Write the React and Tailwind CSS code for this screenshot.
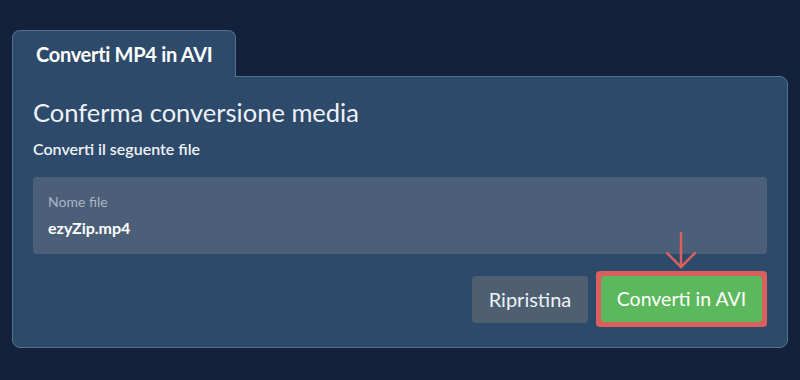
export default function App() {
  return (
    <div className="min-h-[380px] w-[800px] bg-[#11223a] pt-[30px] px-3 font-['Lato','Noto_Sans',sans-serif] text-white">
      <div className="flex flex-col">
        <div className="relative z-10 -mb-px self-start rounded-t-lg border-x border-t border-[#56708f] bg-[#2d4a6a] px-[23px] pt-[11px] pb-[11px]">
          <h1 className="text-[20px] font-bold leading-[24px] tracking-[-0.3px]">Converti MP4 in AVI</h1>
        </div>
        <div className="rounded-tr-lg rounded-b-lg border border-[#56708f] bg-[#2d4a6a] px-5 pt-[19px] pb-5">
          <h2 className="text-[25.5px] leading-8 text-[#eef2f6]">Conferma conversione media</h2>
          <p className="mt-[11px] text-[16px] font-semibold leading-5 text-[#eef2f6]">Converti il seguente file</p>
          <div className="mt-[18px] h-[77px] rounded bg-[#4b6078] px-[15px] pt-[16px]">
            <div className="text-[14px] leading-[18px] text-[#a9b5c2]">Nome file</div>
            <div className="mt-[7px] text-[16px] font-bold leading-5 text-white">ezyZip.mp4</div>
          </div>
          <div className="mt-[17px] flex items-center justify-end gap-2">
            <button className="h-[47px] w-[116px] rounded bg-[#4e5f72] text-[20px] text-[#eef2f6]">Ripristina</button>
            <div className="relative rounded bg-[#d9605c] p-[5px]">
              <svg className="absolute left-[70px] -top-[39px]" width="30" height="38" viewBox="0 0 30 38" fill="none" stroke="#d9605c" strokeWidth="2.5" strokeLinecap="round">
                <path d="M15 1v34" />
                <path d="M1 21l14 14 14-14" />
              </svg>
              <button className="h-[46px] w-[161px] rounded-sm bg-[#5cb85c] text-[19.5px] text-white">Converti in AVI</button>
            </div>
          </div>
        </div>
      </div>
    </div>
  )
}
